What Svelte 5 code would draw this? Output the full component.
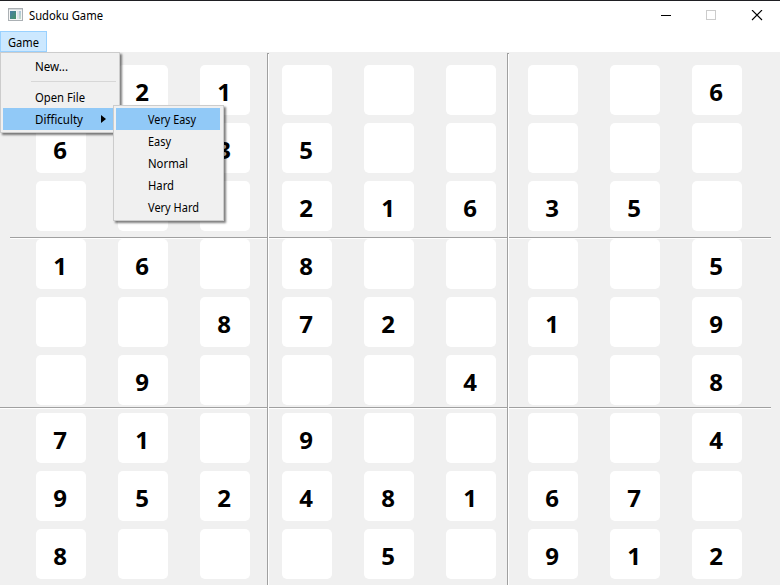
<script>
  const rows = [
    ' 21     6',
    '6 35     ',
    '   21635 ',
    '16 8    5',
    '  872 1 9',
    ' 9   4  8',
    '71 9    4',
    '95248167 ',
    '8   5 912'
  ];
  const cells = rows.flatMap((r) => r.split(''));
  const levels = [
    { name: 'Very Easy', w: 48 },
    { name: 'Easy', w: 23 },
    { name: 'Normal', w: 40 },
    { name: 'Hard', w: 26 },
    { name: 'Very Hard', w: 51 }
  ];
</script>

{#snippet label(text, w)}
  <svg class="label" width={w + 4} height="18" viewBox="0 0 {w + 4} 18">
    <text x="0" y="13" textLength={w} lengthAdjust="spacingAndGlyphs">{text}</text>
  </svg>
{/snippet}

<div class="window">
  <header>
    <svg class="app" width="15" height="13" viewBox="0 0 15 13">
      <defs>
        <linearGradient id="pane" x1="0" y1="0" x2="1" y2="1">
          <stop offset="0" stop-color="#4a7fa8" />
          <stop offset="1" stop-color="#459164" />
        </linearGradient>
        <linearGradient id="strip" x1="0" y1="0" x2="0" y2="1">
          <stop offset="0" stop-color="#86a9c8" />
          <stop offset="1" stop-color="#a8d0b2" />
        </linearGradient>
      </defs>
      <rect x=".5" y=".5" width="14" height="12" fill="#f5f5f5" stroke="#abb0b4" />
      <rect x="1" y="1" width="13" height="1" fill="#d5dadd" />
      <rect x="2" y="3" width="6" height="8" fill="url(#pane)" />
      <rect x="9" y="3" width="2" height="8" fill="#dfe5ea" />
      <rect x="11" y="3" width="2" height="8" fill="url(#strip)" opacity=".65" />
    </svg>
    <div class="title">{@render label('Sudoku Game', 74)}</div>
    <svg class="controls" width="102" height="11" viewBox="0 0 102 11" shape-rendering="crispEdges">
      <rect x="0" y="5" width="10" height="1" fill="#000" />
      <rect x="45.5" y=".5" width="9" height="9" fill="none" stroke="#ccc" />
      <path d="M91 0L101 10M101 0L91 10" fill="none" stroke="#000" stroke-width="1.1" shape-rendering="auto" />
    </svg>
  </header>
  <nav><div class="game">{@render label('Game', 31)}</div></nav>
  <main>
    <div class="grid">
      {#each cells as c}<div class="cell"><span>{c}</span></div>{/each}
    </div>
    <i class="h h1"></i><i class="h h2"></i>
    <i class="v v1"></i><i class="v v2"></i>
  </main>

  <div class="menu main-menu">
    <div class="item">{@render label('New...', 33)}</div>
    <hr />
    <div class="item">{@render label('Open File', 50)}</div>
    <div class="item active">
      {@render label('Difficulty', 48)}
      <svg class="arrow" width="5" height="8" viewBox="0 0 5 8"><path d="M0 0L5 4L0 8Z" /></svg>
    </div>
  </div>
  <div class="menu sub-menu">
    {#each levels as l, i}
      <div class="item" class:active={i === 0}>{@render label(l.name, l.w)}</div>
    {/each}
  </div>
</div>

<style>
  .window {
    position: relative;
    box-sizing: border-box;
    width: 780px;
    height: 586px;
    overflow: hidden;
    background: #fff;
    border-top: 1px solid #1f1f23;
    font-family: 'Noto Sans', 'Open Sans', sans-serif;
    font-size: 12px;
    color: #000;
  }
  .label { display: block; flex: none; overflow: visible; }
  header { display: flex; height: 30px; align-items: flex-start; }
  .app { margin: 7px 0 0 8px; }
  .title { margin: 6px 0 0 6px; }
  .controls { margin: 9px 17px 0 auto; }
  nav { height: 21px; }
  .game {
    box-sizing: border-box;
    width: 47px;
    height: 21px;
    padding: 2px 0 0 7px;
    background: #cce8ff;
    border: 1px solid #99d1ff;
  }
  main { position: relative; height: 533px; background: #f0f0f0; overflow: hidden; }
  .grid {
    display: grid;
    grid-template-columns: repeat(9, 50px);
    grid-auto-rows: 50px;
    gap: 8px 32px;
    padding: 13px 0 0 36px;
  }
  .cell {
    display: flex;
    justify-content: center;
    background: #fff;
    border-radius: 5px;
    font-size: 24px;
    line-height: 54px;
    font-weight: 700;
  }
  .cell span { margin-left: -2px; }
  .h, .v { position: absolute; background: #a0a0a0; }
  .h { height: 1px; border-bottom: 1px solid #fff; right: 9px; }
  .v { width: 1px; border-right: 1px solid #fff; top: 1px; bottom: 0; }
  .v::before { content: ''; display: block; width: 2px; height: 1px; background: #a0a0a0; }
  .h1 { left: 10px; top: 185px; }
  .h2 { left: 0; top: 355px; }
  .v1 { left: 267px; }
  .v2 { left: 507px; }
  .menu {
    position: absolute;
    box-sizing: border-box;
    padding: 2px;
    background: #f0f0f0;
    border: 1px solid #ccc;
    box-shadow: 2px 2px 2px rgba(0, 0, 0, 0.5);
  }
  .main-menu { left: 0; top: 51px; width: 120px; height: 81px; }
  .sub-menu { left: 113px; top: 104px; width: 111px; height: 116px; padding-right: 3px; }
  .item { display: flex; box-sizing: border-box; height: 22px; padding: 3px 0 0 32px; }
  .active { background: #91c9f7; }
  hr { height: 1px; margin: 4px 1px 4px 28px; border: 0; background: #d7d7d7; }
  .arrow { margin: 4px 0 0 14px; }
</style>
